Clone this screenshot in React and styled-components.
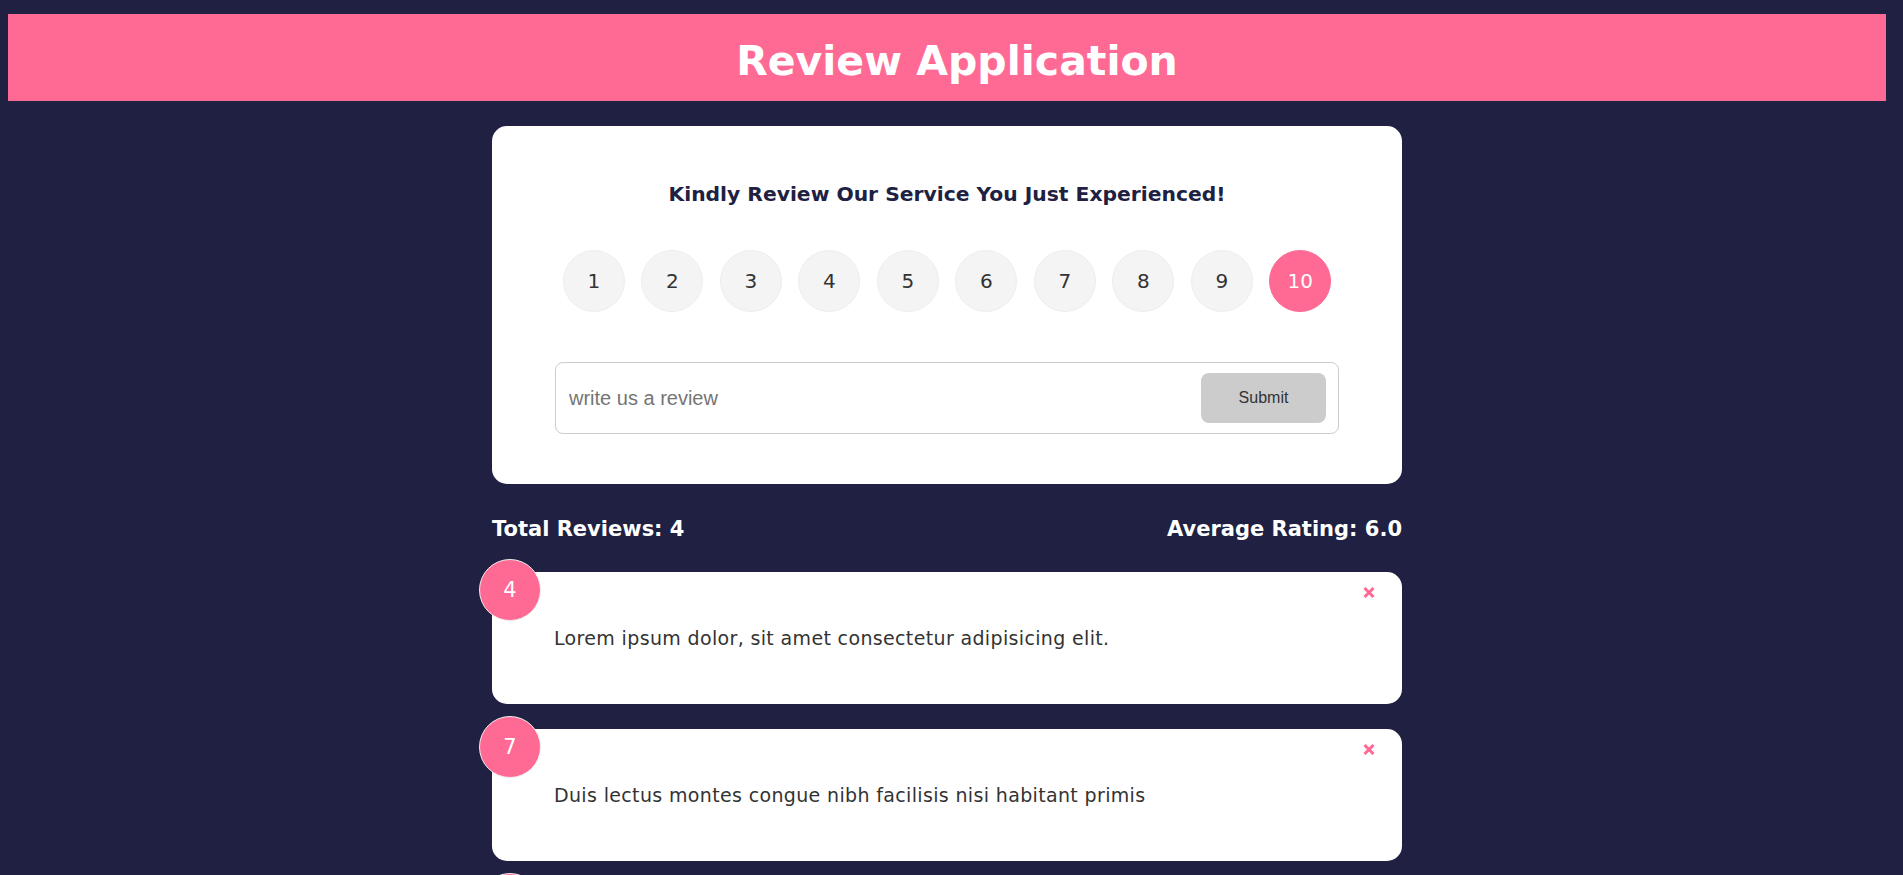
import { useState } from "react";
import styled, { createGlobalStyle } from "styled-components";

const GlobalStyle = createGlobalStyle`
  * {
    box-sizing: border-box;
  }

  body {
    margin: 0;
    background-color: #202142;
    font-family: "DejaVu Sans", sans-serif;
    color: #fff;
  }
`;

const Page = styled.div`
  max-width: 1886px;
  padding: 14px 0 40px 8px;
`;

const Header = styled.header`
  height: 87px;
  background-color: #ff6a95;
  display: flex;
  align-items: center;
  justify-content: center;
  padding: 7px 0 0 20px;

  h1 {
    margin: 0;
    font-size: 41px;
    font-weight: 700;
    color: #fff;
  }
`;

const Container = styled.main`
  width: 910px;
  margin: 25px auto 0;
`;

const Card = styled.div`
  position: relative;
  background-color: #fff;
  color: #333;
  border-radius: 15px;
  padding: ${(props) => (props.$review ? "50px 62px" : "50px 63px")};
  margin-bottom: ${(props) => (props.$review ? "25px" : "0")};
  line-height: 32px;
  font-size: 19px;
  letter-spacing: 0.35px;
`;

const Title = styled.h2`
  margin: 0;
  text-align: center;
  font-size: 20.3px;
  line-height: 36px;
  font-weight: 700;
  letter-spacing: 0;
  color: #202142;
`;

const RatingList = styled.ul`
  list-style: none;
  display: flex;
  justify-content: center;
  gap: 16.5px;
  margin: 38px 0 50px;
  padding: 0;
`;

const RatingItem = styled.li`
  width: 62px;
  height: 62px;
  border-radius: 50%;
  border: 1px solid ${(props) => (props.$active ? "#ff6a95" : "#eee")};
  background-color: ${(props) => (props.$active ? "#ff6a95" : "#f4f4f4")};
  color: ${(props) => (props.$active ? "#fff" : "#333")};
  display: flex;
  align-items: center;
  justify-content: center;
  font-size: 20px;
  font-weight: 400;
  letter-spacing: 0;
  cursor: pointer;
`;

const InputGroup = styled.form`
  display: flex;
  align-items: center;
  height: 72px;
  border: 1px solid #ccc;
  border-radius: 8px;
  padding: 10px 12px 10px 13px;
`;

const ReviewInput = styled.input`
  flex: 1;
  border: none;
  outline: none;
  padding: 0;
  font-family: "Liberation Sans", Arial, sans-serif;
  font-size: 20px;
  color: #333;

  &::placeholder {
    color: #757575;
  }
`;

const SubmitButton = styled.button`
  width: 125px;
  height: 50px;
  border: 0;
  border-radius: 8px;
  background-color: #ccc;
  color: #333;
  font-family: "Liberation Sans", Arial, sans-serif;
  font-size: 16px;
`;

const Stats = styled.div`
  display: flex;
  justify-content: space-between;
  align-items: center;
  margin: 27px 0 25px;

  h4 {
    margin: 0;
    font-size: 21px;
    line-height: 36px;
    font-weight: 700;
    color: #fff;
  }
`;

const NumBadge = styled.div`
  position: absolute;
  top: -13px;
  left: -13px;
  width: 62px;
  height: 62px;
  border-radius: 50%;
  border: 1px solid #eee;
  background-color: #ff6a95;
  color: #fff;
  display: flex;
  align-items: center;
  justify-content: center;
  font-size: 21px;
  font-weight: 400;
  letter-spacing: 0;
`;

const CloseButton = styled.button`
  position: absolute;
  top: 15px;
  right: 27px;
  padding: 0;
  border: none;
  background: none;
  display: flex;
  cursor: pointer;
`;

const reviewsData = [
  { id: 1, rating: 4, text: "Lorem ipsum dolor, sit amet consectetur adipisicing elit." },
  { id: 2, rating: 7, text: "Duis lectus montes congue nibh facilisis nisi habitant primis" },
  { id: 3, rating: 10, text: "Vivamus sagittis lacus vel augue laoreet rutrum faucibus." },
  { id: 4, rating: 3, text: "Cras mattis consectetur purus sit amet fermentum." },
];

function App() {
  const [selected, setSelected] = useState(10);
  const [reviews, setReviews] = useState(reviewsData);

  const average =
    reviews.length === 0
      ? 0
      : reviews.reduce((sum, r) => sum + r.rating, 0) / reviews.length;

  const deleteHandler = (id) => {
    setReviews((old) => old.filter((r) => r.id !== id));
  };

  return (
    <Page>
      <GlobalStyle />
      <Header>
        <h1>Review Application</h1>
      </Header>
      <Container>
        <Card>
          <Title>Kindly Review Our Service You Just Experienced!</Title>
          <RatingList>
            {[1, 2, 3, 4, 5, 6, 7, 8, 9, 10].map((n) => (
              <RatingItem key={n} $active={n === selected} onClick={() => setSelected(n)}>
                {n}
              </RatingItem>
            ))}
          </RatingList>
          <InputGroup onSubmit={(e) => e.preventDefault()}>
            <ReviewInput type="text" placeholder="write us a review" />
            <SubmitButton type="submit" disabled>
              Submit
            </SubmitButton>
          </InputGroup>
        </Card>

        <Stats>
          <h4>Total Reviews: {reviews.length}</h4>
          <h4>Average Rating: {average.toFixed(1)}</h4>
        </Stats>

        {reviews.map((review) => (
          <Card $review key={review.id}>
            <NumBadge>{review.rating}</NumBadge>
            <CloseButton onClick={() => deleteHandler(review.id)}>
              <svg width="12" height="11" viewBox="0 0 12 11">
                <path d="M1.5 1L10.5 10M10.5 1L1.5 10" stroke="#ff6a95" strokeWidth="3" />
              </svg>
            </CloseButton>
            {review.text}
          </Card>
        ))}
      </Container>
    </Page>
  );
}

export default App;
